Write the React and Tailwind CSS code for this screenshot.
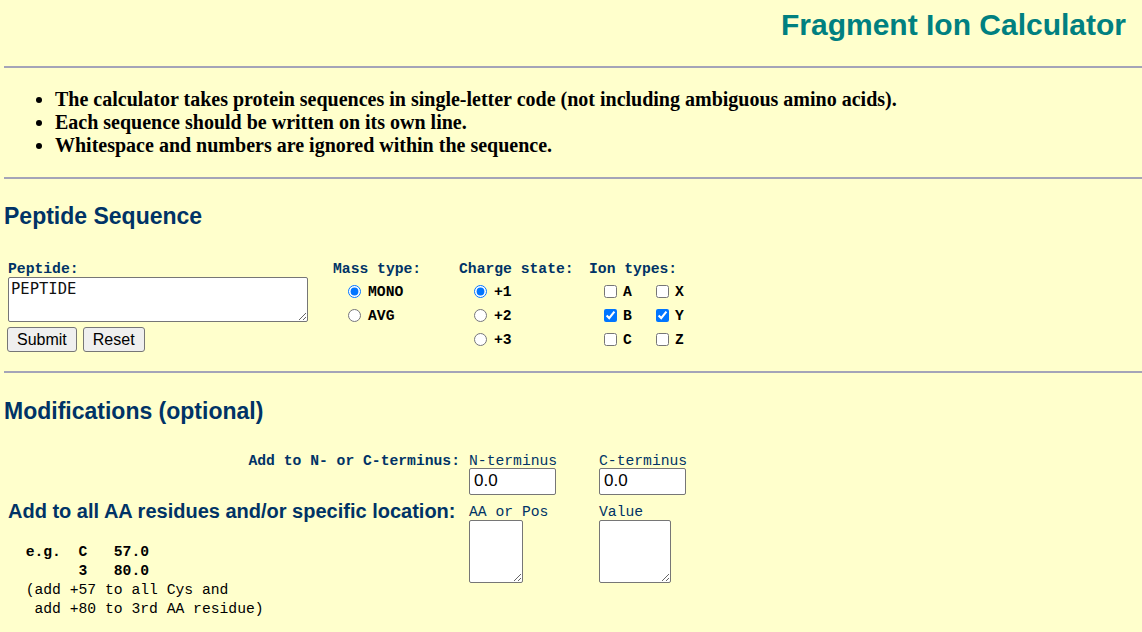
const sans = "font-['Liberation_Sans',Arial,sans-serif]";
const mono = "font-['Liberation_Mono','DejaVu_Sans_Mono',monospace]";

function Rule({ className = "" }) {
  return <div className={`h-[2px] bg-[#a4a4b8] ${className}`} />;
}

function Radio({ label, checked }) {
  return (
    <label className="flex items-center h-[24px]">
      <input
        type="radio"
        defaultChecked={checked}
        className="w-[13px] h-[13px] m-0 mb-[3px] accent-[#0075ff]"
      />
      <span className="ml-[7px]">{label}</span>
    </label>
  );
}

function Check({ label, checked }) {
  return (
    <label className="flex items-center h-[24px]">
      <input
        type="checkbox"
        defaultChecked={checked}
        className="w-[13px] h-[13px] m-0 mb-[3px] accent-[#0075ff]"
      />
      <span className="ml-[6px]">{label}</span>
    </label>
  );
}

// small column caption used above each field
function Caption({ children, className = "" }) {
  return (
    <div className={`h-[17px] pt-[3px] leading-[15px] ${className}`}>
      {children}
    </div>
  );
}

export default function App() {
  return (
    <div className="min-h-screen bg-[#ffffcc] pl-[4px] pb-4 text-black">
      <h1
        className={`${sans} pt-[10px] pr-[16px] text-right text-[30px] leading-[30px] font-bold text-[#008080]`}
      >
        Fragment Ion Calculator
      </h1>

      <Rule className="mt-[26px]" />

      <ul className="mt-[20px] pl-[51px] list-disc font-['Liberation_Serif','Times_New_Roman',serif] text-[20px] leading-[23px] font-bold">
        <li>
          The calculator takes protein sequences in single-letter code (not
          including ambiguous amino acids).
        </li>
        <li>Each sequence should be written on its own line.</li>
        <li>Whitespace and numbers are ignored within the sequence.</li>
      </ul>

      <Rule className="mt-[20px]" />

      <h2
        className={`${sans} mt-[24px] text-[23px] leading-[26px] font-bold text-[#003366]`}
      >
        Peptide Sequence
      </h2>

      <form className={`${mono} mt-[31px] flex text-[14.7px] leading-[17px]`}>
        <div className="w-[329px]">
          <div className="pl-[4px] pt-[2px] leading-[15px] font-bold text-[#003366]">
            Peptide:
          </div>
          <textarea
            defaultValue="PEPTIDE"
            className="block ml-[4px] w-[300px] h-[45px] px-[2px] pt-[2px] bg-white border border-[#767676] rounded-[2px] font-['DejaVu_Sans_Mono',monospace] text-[15.5px] leading-[18px] text-[#111]"
          />
          <div className={`${sans} mt-[5px] ml-[3px] flex gap-[6px] text-[16px]`}>
            <button
              type="button"
              className="h-[25px] px-[9px] bg-[#efefef] border border-[#767676] rounded-[3px]"
            >
              Submit
            </button>
            <button
              type="button"
              className="h-[25px] px-[9px] bg-[#efefef] border border-[#767676] rounded-[3px]"
            >
              Reset
            </button>
          </div>
        </div>

        <div className="w-[126px]">
          <div className="pt-[2px] leading-[15px] font-bold text-[#003366]">
            Mass type:
          </div>
          <div className="mt-[3.5px] pl-[15px] font-bold">
            <Radio label="MONO" checked />
            <Radio label="AVG" />
          </div>
        </div>

        <div className="w-[130px]">
          <div className="pt-[2px] leading-[15px] font-bold text-[#003366]">
            Charge state:
          </div>
          <div className="mt-[3.5px] pl-[15px] font-bold">
            <Radio label="+1" checked />
            <Radio label="+2" />
            <Radio label="+3" />
          </div>
        </div>

        <div>
          <div className="pt-[2px] leading-[15px] font-bold text-[#003366]">
            Ion types:
          </div>
          <div className="mt-[3.5px] pl-[15px] grid grid-cols-[52px_auto] font-bold">
            <Check label="A" />
            <Check label="X" />
            <Check label="B" checked />
            <Check label="Y" checked />
            <Check label="C" />
            <Check label="Z" />
          </div>
        </div>
      </form>

      <Rule className="mt-[18px]" />

      <h2
        className={`${sans} mt-[25px] text-[23px] leading-[26px] font-bold text-[#003366]`}
      >
        Modifications (optional)
      </h2>

      <div
        className={`${mono} mt-[27px] grid grid-cols-[465px_130px_auto] gap-y-[7px] text-[14.7px] leading-[17px] text-[#003366]`}
      >
        <Caption className="pr-[9px] text-right font-bold">
          Add to N- or C-terminus:
        </Caption>
        <div>
          <Caption>N-terminus</Caption>
          <input
            type="text"
            defaultValue="0.0"
            className={`${sans} block w-[87px] h-[27px] px-[4px] bg-white border border-[#767676] rounded-[2px] text-[17px] text-black`}
          />
        </div>
        <div>
          <Caption>C-terminus</Caption>
          <input
            type="text"
            defaultValue="0.0"
            className={`${sans} block w-[87px] h-[27px] px-[4px] bg-white border border-[#767676] rounded-[2px] text-[17px] text-black`}
          />
        </div>

        <div className="pl-[4px] pt-[1px]">
          <h3
            className={`${sans} text-[20px] leading-[16px] font-bold text-[#003366]`}
          >
            Add to all AA residues and/or specific location:
          </h3>
          <pre className={`${mono} mt-[24px] text-[14.7px] leading-[19.3px] text-black`}>
            <b>{"  e.g.  C   57.0\n        3   80.0"}</b>
            {"\n  (add +57 to all Cys and\n   add +80 to 3rd AA residue)"}
          </pre>
        </div>
        <div>
          <Caption className="h-[18px]">AA or Pos</Caption>
          <textarea className="block w-[54px] h-[63px] bg-white border border-[#767676] rounded-[2px]" />
        </div>
        <div>
          <Caption className="h-[18px]">Value</Caption>
          <textarea className="block w-[72px] h-[63px] bg-white border border-[#767676] rounded-[2px]" />
        </div>
      </div>
    </div>
  );
}
